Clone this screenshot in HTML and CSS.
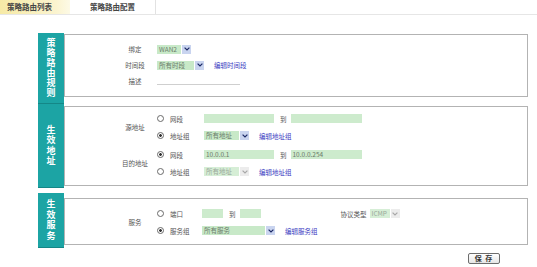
FILE: index.html
```html
<!DOCTYPE html>
<html lang="zh-CN">
<head>
  <meta charset="UTF-8" />
  <title>策略路由配置</title>
  <link rel="stylesheet" href="styles.css">
</head>
<body>
  <div class="tabs">
    <div class="tab active">策略路由列表</div>
    <div class="tab">策略路由配置</div>
  </div>

  <div class="form">
    <div class="section sec-rule">
      <div class="side"><span>策略路由规则</span></div>
      <div class="box">
        <div class="row">
          <span class="label">绑定</span>
          <span class="select"><span class="val w-wan">WAN2</span><span class="arrow"><svg width="6" height="4" viewBox="0 0 6 4"><path d="M0.6 0.6 L3 3 L5.4 0.6" fill="none" stroke="#1c2a66" stroke-width="1.2"/></svg></span></span>
        </div>
        <div class="row">
          <span class="label">时间段</span>
          <span class="select"><span class="val w-time">所有时段</span><span class="arrow"><svg width="6" height="4" viewBox="0 0 6 4"><path d="M0.6 0.6 L3 3 L5.4 0.6" fill="none" stroke="#1c2a66" stroke-width="1.2"/></svg></span></span>
          <a class="link" href="#">编辑时间段</a>
        </div>
        <div class="row">
          <span class="label">描述</span>
          <span class="line"></span>
        </div>
      </div>
    </div>

    <div class="section sec-addr">
      <div class="side"><span>生效地址</span></div>
      <div class="box">
        <div class="group">
          <span class="label">源地址</span>
          <div class="opts">
            <div class="opt">
              <span class="choice"><span class="radio"></span>网段</span>
              <span class="field w-ip"></span>
              <span class="to">到</span>
              <span class="field w-ip2"></span>
            </div>
            <div class="opt">
              <span class="choice"><span class="radio on"></span>地址组</span>
              <span class="select"><span class="val w-grp">所有地址</span><span class="arrow"><svg width="6" height="4" viewBox="0 0 6 4"><path d="M0.6 0.6 L3 3 L5.4 0.6" fill="none" stroke="#1c2a66" stroke-width="1.2"/></svg></span></span>
              <a class="link" href="#">编辑地址组</a>
            </div>
          </div>
        </div>
        <div class="group">
          <span class="label">目的地址</span>
          <div class="opts">
            <div class="opt">
              <span class="choice"><span class="radio on"></span>网段</span>
              <span class="field w-ip">10.0.0.1</span>
              <span class="to">到</span>
              <span class="field w-ip2">10.0.0.254</span>
            </div>
            <div class="opt">
              <span class="choice"><span class="radio"></span>地址组</span>
              <span class="select off"><span class="val w-grp">所有地址</span><span class="arrow"><svg width="6" height="4" viewBox="0 0 6 4"><path d="M0.6 0.6 L3 3 L5.4 0.6" fill="none" stroke="#a8a8a8" stroke-width="1.2"/></svg></span></span>
              <a class="link" href="#">编辑地址组</a>
            </div>
          </div>
        </div>
      </div>
    </div>

    <div class="section sec-svc">
      <div class="side"><span>生效服务</span></div>
      <div class="box">
        <div class="group">
          <span class="label">服务</span>
          <div class="opts">
            <div class="opt">
              <span class="choice narrow"><span class="radio"></span>端口</span>
              <span class="field w-port"></span>
              <span class="to">到</span>
              <span class="field w-port"></span>
              <span class="proto">协议类型</span>
              <span class="select off"><span class="val w-icmp">ICMP</span><span class="arrow"><svg width="6" height="4" viewBox="0 0 6 4"><path d="M0.6 0.6 L3 3 L5.4 0.6" fill="none" stroke="#a8a8a8" stroke-width="1.2"/></svg></span></span>
            </div>
            <div class="opt">
              <span class="choice narrow"><span class="radio on"></span>服务组</span>
              <span class="select"><span class="val w-svc">所有服务</span><span class="arrow"><svg width="6" height="4" viewBox="0 0 6 4"><path d="M0.6 0.6 L3 3 L5.4 0.6" fill="none" stroke="#1c2a66" stroke-width="1.2"/></svg></span></span>
              <a class="link far" href="#">编辑服务组</a>
            </div>
          </div>
        </div>
      </div>
    </div>

    <div class="actions">
      <button class="save">保&nbsp;存</button>
    </div>
  </div>
</body>
</html>
```

FILE: styles.css
```css
body {
  margin: 0;
  font-family: "Noto Sans CJK SC", "DejaVu Sans", sans-serif;
  font-size: 6.5px;
  color: #555;
  background: #fff;
}
.tabs {
  display: flex;
  height: 14px;
  border-bottom: 1px solid #e6e6e6;
}
.tab {
  width: 85px;
  line-height: 14px;
  font-size: 7.5px;
  font-weight: bold;
  color: #444;
  text-align: center;
  border-right: 1px solid #e2e2e2;
}
.tab.active {
  width: 63px;
  padding-left: 7px;
  text-align: left;
  border-right: none;
  background: linear-gradient(to right, #f6eaa6, #fbf4cf 80%, #fdfae6);
}
.form {
  margin: 18px 0 0 38px;
  width: 490px;
}
.section {
  display: flex;
}
.side {
  width: 26px;
  flex: none;
  background: #1ca4a4;
  border-bottom: 1px solid #148787;
  color: #fff;
  font-weight: bold;
  font-size: 9px;
  line-height: 10.5px;
  display: flex;
  align-items: center;
  justify-content: center;
}
.side span {
  width: 9px;
  text-align: center;
}
.box {
  flex: 1;
  align-self: flex-start;
  border: 1px solid #b3b3b3;
}
.sec-rule .side { height: 70px; }
.sec-rule .side span { line-height: 10px; }
.sec-rule .box { margin-top: 1px; padding: 6px 0 7px; }
.sec-addr .side { height: 83px; }
.sec-addr .box { margin-top: 2px; padding: 3px 0 5px; }
.sec-addr .group + .group { margin-top: 2px; }
.sec-svc { margin-top: 5px; }
.sec-svc .side { height: 54px; }
.sec-svc .box { margin-top: 5px; padding: 6px 0 5px; }

.row, .opt {
  display: flex;
  align-items: center;
}
.row { height: 16px; }
.opt { height: 17px; }
.group {
  display: flex;
  align-items: center;
}
.label {
  width: 40px;
  margin: 0 2px 0 50px;
  text-align: center;
  color: #555;
}
.opts {
  display: flex;
  flex-direction: column;
}
.choice {
  width: 47px;
  display: flex;
  align-items: center;
  color: #555;
}
.choice.narrow { width: 45px; }
.radio {
  width: 5px;
  height: 5px;
  border: 1px solid #6a6a6a;
  border-radius: 50%;
  margin-right: 6px;
  background: #fff;
}
.radio.on {
  background: radial-gradient(circle, #333 1.1px, #fff 1.6px);
}
.field {
  display: inline-block;
  height: 9px;
  line-height: 9px;
  padding-left: 2px;
  background: #cdebcd;
  color: #6a7a6a;
  box-sizing: border-box;
}
.w-ip { width: 70px; }
.w-ip2 { width: 71px; }
.w-port { width: 21px; }
.to {
  margin: 0 4px 0 6px;
  color: #555;
}
.select {
  display: inline-flex;
  align-items: center;
  height: 9px;
}
.select .val {
  height: 9px;
  line-height: 9px;
  padding-left: 2px;
  box-sizing: border-box;
  background: #c8e9c8;
  color: #6b7d6b;
}
.select .arrow {
  width: 9px;
  height: 9px;
  margin-left: 1px;
  background: #c9d4ef;
  display: flex;
  align-items: center;
  justify-content: center;
}
.select.off .val { background: #d6eed6; color: #9aa89a; }
.select.off .arrow { background: #ececec; }
.w-wan { width: 24px; }
.w-time { width: 37px; }
.w-grp { width: 35px; }
.w-svc { width: 63px; }
.w-icmp { width: 20px; }
.line {
  width: 83px;
  height: 7px;
  border-bottom: 1px solid #cfcfcf;
}
.link {
  margin-left: 10px;
  color: #3a3cc2;
  text-decoration: none;
}
.link.far { margin-left: 10px; }
.proto {
  margin: 0 3px 0 80px;
  color: #555;
}
.actions {
  display: flex;
  justify-content: flex-end;
  padding-right: 28px;
  margin-top: 5px;
}
.save {
  width: 32px;
  height: 11px;
  padding: 0;
  font-family: "Noto Sans CJK SC", sans-serif;
  font-size: 7px;
  font-weight: bold;
  line-height: 9px;
  letter-spacing: 1px;
  color: #333;
  border: 1px solid #6d6d6d;
  border-radius: 2px;
  background: linear-gradient(#fff, #e6e6e6);
}
```
